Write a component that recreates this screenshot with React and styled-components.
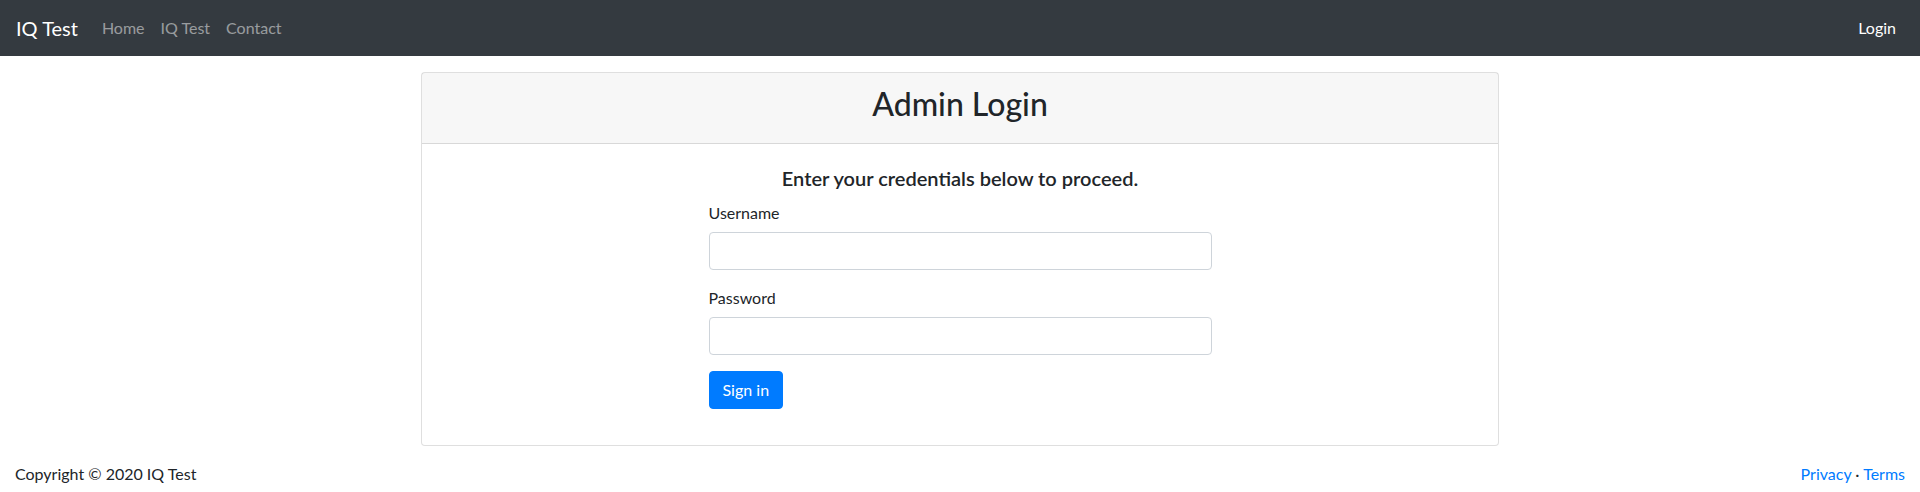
import React from "react";
import styled, { createGlobalStyle } from "styled-components";

const Global = createGlobalStyle`
  html, body { margin: 0; padding: 0; background: #fff; }
  body {
    font-family: "Segoe UI", "Lato", "Noto Sans", sans-serif;
    font-size: 16px;
    line-height: 1.5;
    color: #212529;
  }
  * { box-sizing: border-box; }
`;

const Nav = styled.nav`
  height: 56px;
  background: #343a40;
  display: flex;
  align-items: center;
  padding: 0 16px;
`;

const Brand = styled.a`
  font-size: 20px;
  line-height: 30px;
  color: #fff;
  margin-right: 16px;
  text-decoration: none;
`;

const NavList = styled.div`
  display: flex;
  flex: 1;
`;

const NavLink = styled.a`
  padding: 8px;
  color: ${(p) => (p.$light ? "#fff" : "rgba(255,255,255,.5)")};
  text-decoration: none;
  font-size: 16px;
  line-height: 24px;
`;

const Main = styled.main`
  display: flex;
  justify-content: center;
  padding-top: 16px;
`;

const Card = styled.section`
  width: 1078px;
  border: 1px solid rgba(0, 0, 0, 0.125);
  border-radius: 4px;
  background: #fff;
`;

const CardHeader = styled.header`
  background: rgba(0, 0, 0, 0.03);
  border-bottom: 1px solid rgba(0, 0, 0, 0.125);
  padding: 12px 20px;
  text-align: center;
`;

const Title = styled.h2`
  margin: 0 0 8px;
  font-size: 32px;
  font-weight: 500;
  line-height: 1.2;
`;

const CardBody = styled.div`
  padding: 22px 20px 20px;
  display: flex;
  flex-direction: column;
  align-items: center;
`;

const Lead = styled.h5`
  margin: 0 0 11px;
  font-size: 20px;
  font-weight: 600;
  line-height: 24px;
  text-align: center;
`;

const Form = styled.form`
  width: 503px;
  margin-bottom: 16px;
`;

const Group = styled.div`
  margin-bottom: 16px;
`;

const Label = styled.label`
  display: block;
  margin-bottom: 7px;
  font-size: 16px;
  line-height: 24px;
`;

const Input = styled.input`
  display: block;
  width: 100%;
  height: 38px;
  border: 1px solid #ced4da;
  border-radius: 4px;
  padding: 6px 12px;
  font: inherit;
`;

const Button = styled.button`
  height: 38px;
  padding: 6px 13px;
  background: #007bff;
  border: 1px solid #007bff;
  border-radius: 4px;
  color: #fff;
  font: inherit;
  line-height: 24px;
`;

const Footer = styled.footer`
  display: flex;
  justify-content: space-between;
  padding: 16px 15px 0;
  font-size: 16px;
  line-height: 24px;
`;

const FLink = styled.a`
  color: #007bff;
  text-decoration: none;
`;

export default function App() {
  return (
    <>
      <Global />
      <Nav>
        <Brand href="#">IQ Test</Brand>
        <NavList>
          <NavLink href="#">Home</NavLink>
          <NavLink href="#">IQ Test</NavLink>
          <NavLink href="#">Contact</NavLink>
        </NavList>
        <NavLink href="#" $light>Login</NavLink>
      </Nav>
      <Main>
        <Card>
          <CardHeader>
            <Title>Admin Login</Title>
          </CardHeader>
          <CardBody>
            <Lead>Enter your credentials below to proceed.</Lead>
            <Form onSubmit={(e) => e.preventDefault()}>
              <Group>
                <Label htmlFor="u">Username</Label>
                <Input id="u" type="text" />
              </Group>
              <Group>
                <Label htmlFor="p">Password</Label>
                <Input id="p" type="password" />
              </Group>
              <Button type="submit">Sign in</Button>
            </Form>
          </CardBody>
        </Card>
      </Main>
      <Footer>
        <span>Copyright © 2020 IQ Test</span>
        <span>
          <FLink href="#">Privacy</FLink> · <FLink href="#">Terms</FLink>
        </span>
      </Footer>
    </>
  );
}
